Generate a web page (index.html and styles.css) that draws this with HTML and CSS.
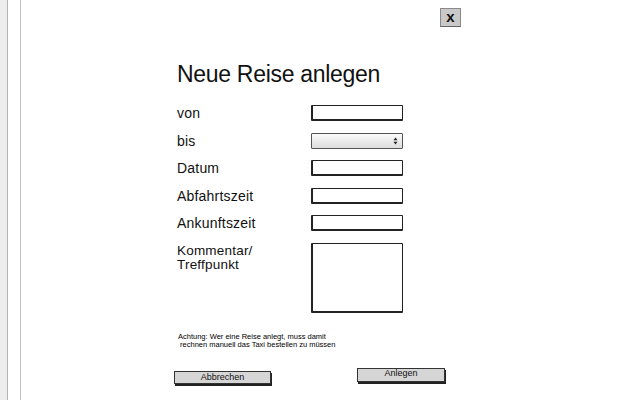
FILE: index.html
```html
<!DOCTYPE html>
<html lang="de">
<head>
<meta charset="utf-8">
<title>Neue Reise anlegen</title>
<link rel="stylesheet" href="styles.css">
</head>
<body>
<div class="rail"></div>
<div class="gutter"></div>
<main class="main">
  <div class="dialog">
    <div class="close-row">
      <div class="close">x</div>
    </div>
    <h1 class="title">Neue Reise anlegen</h1>
    <div class="form">
      <div class="label">von</div>
      <div class="input"></div>
      <div class="label">bis</div>
      <div class="select">
        <svg class="arrows" width="5" height="8" viewBox="0 0 5 8"><path d="M0.5 3.2 L2.5 0.6 L4.5 3.2 Z M0.5 4.8 L2.5 7.4 L4.5 4.8 Z" fill="#222"/></svg>
      </div>
      <div class="label">Datum</div>
      <div class="input"></div>
      <div class="label">Abfahrtszeit</div>
      <div class="input"></div>
      <div class="label">Ankunftszeit</div>
      <div class="input"></div>
      <div class="label label-top">Kommentar/<br>Treffpunkt</div>
      <div class="textarea"></div>
    </div>
    <p class="note">Achtung: Wer eine Reise anlegt, muss damit<br>&nbsp;rechnen manuell das Taxi bestellen zu müssen</p>
    <div class="buttons">
      <div class="btn btn-cancel">Abbrechen</div>
      <div class="btn btn-ok">Anlegen</div>
    </div>
  </div>
</main>
</body>
</html>
```

FILE: styles.css
```css
html, body {
  margin: 0;
  padding: 0;
  background: #ffffff;
}
body {
  display: flex;
  height: 400px;
  overflow: hidden;
  font-family: "Liberation Sans", Arial, sans-serif;
  color: #111;
}
.rail {
  width: 7px;
  background: #ededed;
  border-right: 1px solid #b4b4b4;
}
.gutter {
  width: 12px;
  border-right: 1px solid #c4c4c4;
}
.main {
  flex: 1;
}
.dialog {
  margin-left: 156px;
  width: 284px;
  padding-top: 8px;
  display: flex;
  flex-direction: column;
}
.close-row {
  display: flex;
  justify-content: flex-end;
}
.close {
  box-sizing: border-box;
  width: 21px;
  height: 19px;
  background: #c9c9c9;
  border: 1px solid #8a8a8a;
  border-bottom-color: #666;
  font-weight: bold;
  font-size: 15px;
  line-height: 15px;
  text-align: center;
  color: #111;
}
.title {
  margin: 33px 0 0 0;
  font-size: 23px;
  font-weight: normal;
  line-height: 28px;
  letter-spacing: -0.3px;
  color: #111;
}
.form {
  margin-top: 17px;
  display: grid;
  grid-template-columns: 134px 92px;
  row-gap: 11.5px;
  align-items: center;
}
.label {
  font-size: 14px;
  line-height: 16px;
  letter-spacing: 0.2px;
}
.label-top {
  align-self: start;
  font-size: 13.5px;
  line-height: 14px;
  padding-top: 1px;
}
.input, .select, .textarea {
  box-sizing: border-box;
  height: 16px;
  border: 1.5px solid #222;
  border-left-width: 2px;
  border-bottom-width: 2px;
  border-radius: 1px;
  background: #fff;
}
.select {
  border-width: 1px;
  border-color: #555;
  background: linear-gradient(#fafafa, #dcdcdc);
  display: flex;
  align-items: center;
  justify-content: flex-end;
  padding-right: 4px;
}
.arrows {
  display: block;
}
.textarea {
  height: 70px;
}
.note {
  margin: 20px 0 0 1px;
  font-size: 7.5px;
  line-height: 8px;
  color: #000;
}
.buttons {
  margin-top: 19px;
  display: flex;
  align-items: flex-start;
}
.btn {
  box-sizing: border-box;
  background: #d6d6d6;
  border: 1px solid #333;
  box-shadow: 1px 2px 0 #222;
  font-size: 9px;
  text-align: center;
  color: #111;
}
.btn-cancel {
  margin-left: -3px;
  margin-top: 3px;
  width: 97px;
  height: 13px;
  line-height: 11px;
}
.btn-ok {
  margin-left: 86px;
  width: 88px;
  height: 14px;
  line-height: 9px;
}
```
